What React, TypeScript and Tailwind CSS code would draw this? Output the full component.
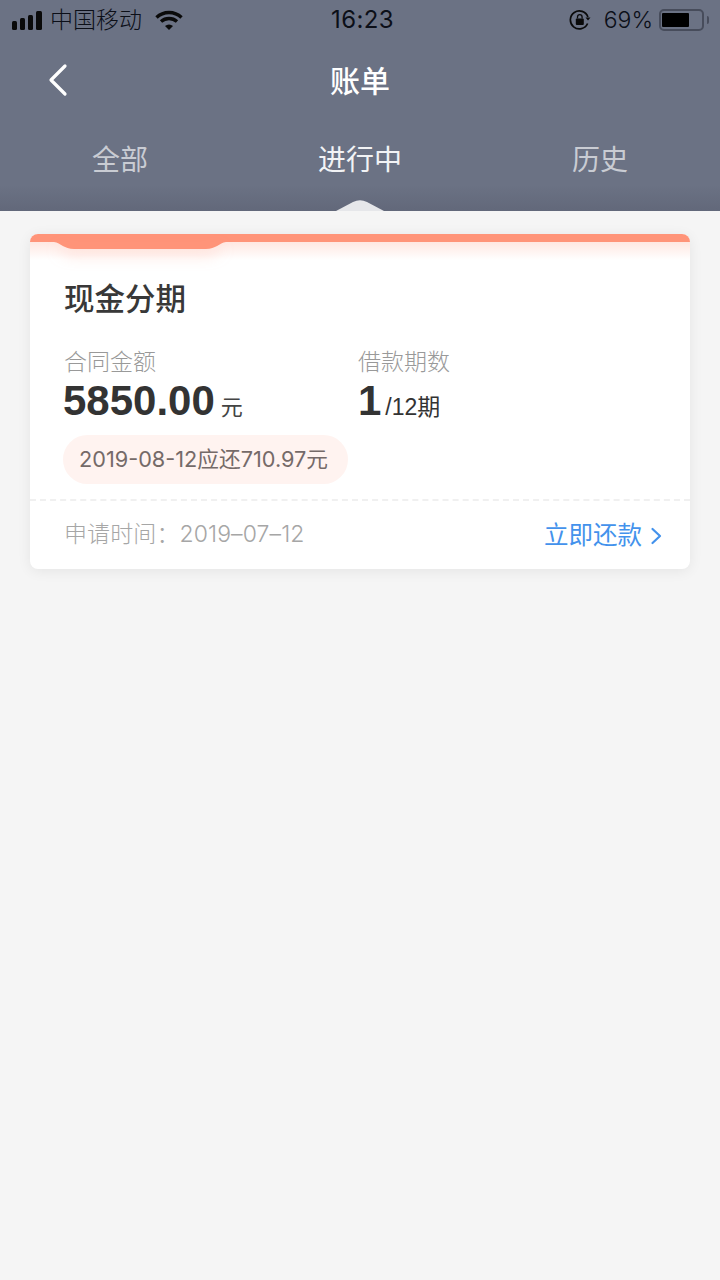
import React from "react";

const cjk = "font-['Inter','Noto_Sans_CJK_SC',sans-serif]";

function StatusBar() {
  return (
    <div className="flex h-10 items-center justify-between pl-3 pr-[11px] text-[23px] text-[#0c0f18]">
      <div className="flex w-[200px] items-center">
        <div className="flex items-end gap-[3px]">
          <span className="h-[9px] w-[5px] rounded-[1.5px] bg-[#0a0a0a]" />
          <span className="h-[12px] w-[5px] rounded-[1.5px] bg-[#0a0a0a]" />
          <span className="h-[15px] w-[5px] rounded-[1.5px] bg-[#0a0a0a]" />
          <span className="h-[19px] w-[6px] rounded-[1.5px] bg-[#0a0a0a]" />
        </div>
        <span className="ml-[8px] font-light leading-none">中国移动</span>
        <svg className="ml-[13px]" width="28" height="20" viewBox="0 0 28 20">
          <path d="M1.5 7.5 A18 18 0 0 1 26.5 7.5" fill="none" stroke="#0a0a0a" strokeWidth="3.4" />
          <path d="M6 11.5 A12 12 0 0 1 22 11.5" fill="none" stroke="#0a0a0a" strokeWidth="3.4" />
          <path d="M10 16 L14 20 L18 16 A6 6 0 0 0 10 16 Z" fill="#0a0a0a" />
        </svg>
      </div>
      <span className="ml-[4px] text-[24px] font-normal leading-none tracking-[0.4px]">16:23</span>
      <div className="flex w-[200px] items-center justify-end">
        <svg width="22" height="22" viewBox="0 0 22 22">
          <path d="M18.6 14.5 A9 9 0 1 1 18.9 8" fill="none" stroke="#0a0a0a" strokeWidth="1.7" />
          <path d="M16.5 8.5 L21.5 8.5 L19 11.5 Z" fill="#0a0a0a" />
          <rect x="6.8" y="9.5" width="8" height="6.5" rx="1" fill="#0a0a0a" />
          <path d="M8.5 9.5 V8 a2.3 2.3 0 0 1 4.6 0 V9.5" fill="none" stroke="#0a0a0a" strokeWidth="1.3" />
        </svg>
        <span className="ml-[13px] text-[23px] font-light leading-none">69%</span>
        <div className="ml-[6px] flex h-[22px] w-[45px] items-center rounded-[5px] border-2 border-[#474c5b] pl-[1px]">
          <span className="h-[14px] w-[27px] rounded-[1px] bg-black" />
        </div>
        <span className="ml-[3px] h-[8px] w-[2px] rounded-r-full bg-[#474c5b]" />
      </div>
    </div>
  );
}

function Header() {
  return (
    <div className="relative h-[211px] bg-[linear-gradient(to_bottom,#6b7284_0,#6b7284_185px,#62687a_211px)]">
      <StatusBar />
      <div className="relative flex h-[81px] items-center justify-center">
        <svg className="absolute left-[46px] top-[23px]" width="24" height="34" viewBox="0 0 24 34">
          <path d="M19 3 L5 17 L19 31" fill="none" stroke="#fff" strokeWidth="3.2" strokeLinecap="round" strokeLinejoin="round" />
        </svg>
        <span className="text-[30px] font-medium leading-none text-white">账单</span>
      </div>
      <div className="mt-[25px] grid grid-cols-3 text-center text-[28px] leading-none">
        <span className="text-[#c9ccd3]">全部</span>
        <span className="text-[#f2f3f5]">进行中</span>
        <span className="text-[#c9ccd3]">历史</span>
      </div>
      <svg className="absolute bottom-0 left-[335px]" width="50" height="12" viewBox="0 0 50 12">
        <path d="M1 12 L18 3 Q25 -0.5 32 3 L49 12 Z" fill="#e6e7ea" />
      </svg>
    </div>
  );
}

function Card() {
  return (
    <div className="relative mx-[30px] mt-[23px] h-[335px] rounded-[8px] bg-white shadow-[0_2px_14px_rgba(0,0,0,0.07)]">
      <div className="h-[8px] rounded-t-[8px] bg-[#ff9479]" />
      <div className="absolute inset-x-0 top-[8px] h-[18px] bg-[linear-gradient(to_bottom,rgba(255,148,121,0.22),rgba(255,148,121,0))]" />
      <svg
        className="absolute left-[24px] top-[8px] drop-shadow-[0_7px_7px_rgba(255,148,121,0.28)]"
        width="172"
        height="7"
        viewBox="0 0 172 7"
      >
        <path d="M0 0 H172 C165 1 162 7 152 7 H20 C10 7 7 1 0 0 Z" fill="#ff9479" />
      </svg>
      <div className="relative px-[34px]">
        <div className="mt-[35px] text-[30.5px] font-medium leading-[44px] text-[#383838]">现金分期</div>
        <div className="mt-[25px] grid grid-cols-[294px_1fr]">
          <div>
            <div className="text-[23px] font-light leading-[33px] text-[#999]">合同金额</div>
            <div className="flex items-baseline leading-[44px]">
              <span className="-ml-[1px] font-['Liberation_Sans'] text-[42px] font-bold text-[#333]">5850.00</span>
              <span className="ml-[6px] text-[22px] text-[#444]">元</span>
            </div>
          </div>
          <div>
            <div className="text-[23px] font-light leading-[33px] text-[#999]">借款期数</div>
            <div className="flex items-baseline leading-[44px]">
              <span className="font-['Liberation_Sans'] text-[42px] font-bold text-[#333]">1</span>
              <span className="ml-[4px] font-['Liberation_Sans','Noto_Sans_CJK_SC'] text-[23px] text-[#333]">/12期</span>
            </div>
          </div>
        </div>
        <div className="-ml-[1px] mt-[6px] flex h-[49px] w-[285px] items-center rounded-full bg-[#fff3f0] pl-[16px] text-[21.7px] text-[#756a68]">
          2019-08-12应还710.97元
        </div>
      </div>
      <div className="mt-[15px] border-t-2 border-dashed border-[#f0f0f0]" />
      <div className="flex h-[67px] items-center justify-between pl-[34px] pr-[26px]">
        <span className="text-[23px] font-light tracking-[0.1px] text-[#a6a6a6]">申请时间：2019–07–12</span>
        <span className="flex translate-y-[1px] items-center text-[24.5px] text-[#4392ec]">
          <span className="mr-[1px]">立即还款</span>
          <svg className="ml-[7px]" width="14" height="20" viewBox="0 0 14 20">
            <path d="M2.5 3 L10 10 L2.5 17" fill="none" stroke="#4392ec" strokeWidth="2.2" strokeLinecap="round" strokeLinejoin="round" />
          </svg>
        </span>
      </div>
    </div>
  );
}

export default function App() {
  return (
    <div className={`h-[1280px] w-[720px] overflow-hidden bg-[#f5f5f5] ${cjk}`}>
      <Header />
      <Card />
    </div>
  );
}
